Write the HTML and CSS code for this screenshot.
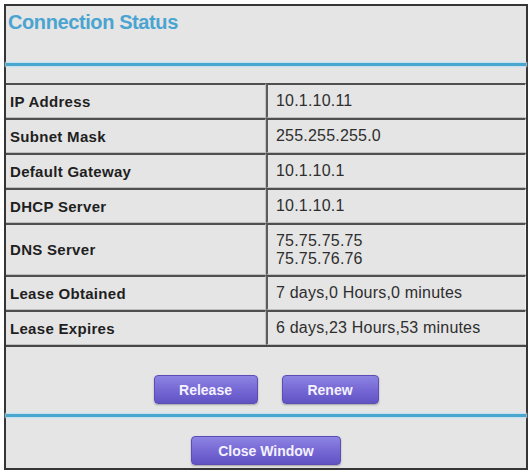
FILE: index.html
```html
<!DOCTYPE html>
<html lang="en">
<head>
    <meta charset="UTF-8">
    <meta name="viewport" content="width=device-width, initial-scale=1.0">
    <title>Connection Status</title>
    <link rel="stylesheet" href="styles.css">
</head>
<body>
    <div class="window">
        <h1>Connection Status</h1>
        <div class="rule rule-top"></div>

        <div class="status-table">
            <div class="status-row">
                <div class="cell cell-label">IP Address</div>
                <div class="cell cell-value">10.1.10.11</div>
            </div>
            <div class="status-row">
                <div class="cell cell-label">Subnet Mask</div>
                <div class="cell cell-value">255.255.255.0</div>
            </div>
            <div class="status-row">
                <div class="cell cell-label">Default Gateway</div>
                <div class="cell cell-value">10.1.10.1</div>
            </div>
            <div class="status-row">
                <div class="cell cell-label">DHCP Server</div>
                <div class="cell cell-value">10.1.10.1</div>
            </div>
            <div class="status-row status-row-tall">
                <div class="cell cell-label">DNS Server</div>
                <div class="cell cell-value">75.75.75.75<br>75.75.76.76</div>
            </div>
            <div class="status-row">
                <div class="cell cell-label">Lease Obtained</div>
                <div class="cell cell-value">7 days,0 Hours,0 minutes</div>
            </div>
            <div class="status-row">
                <div class="cell cell-label">Lease Expires</div>
                <div class="cell cell-value">6 days,23 Hours,53 minutes</div>
            </div>
        </div>

        <div class="actions">
            <button type="button" class="btn btn-release">Release</button>
            <button type="button" class="btn btn-renew">Renew</button>
        </div>
        <div class="rule rule-bottom"></div>
        <div class="actions actions-close">
            <button type="button" class="btn btn-close">Close Window</button>
        </div>
    </div>
</body>
</html>
```

FILE: styles.css
```css
body {
    margin: 0;
    background: #ffffff;
    font-family: 'Liberation Sans', Arial, sans-serif;
}

.window {
    margin: 4px 0 0 4px;
    width: 524px;
    height: 466px;
    box-sizing: border-box;
    border: 2px solid #353535;
    background: #e5e5e5;
}

h1 {
    margin: 4px 0 0 2px;
    font-size: 20px;
    line-height: 24px;
    letter-spacing: -0.4px;
    color: #4aa4d1;
}

.rule {
    height: 3px;
    background: #48a6cf;
    box-shadow: 0 0 2px 1px #bfe0ee;
}

.rule-top {
    margin-top: 29px;
}

.status-table {
    margin-top: 17px;
    border-bottom: 2px solid #474747;
}

.status-row {
    display: grid;
    grid-template-columns: 260px 1fr;
    height: 35px;
}

.status-row-tall {
    height: 52px;
}

.cell {
    display: flex;
    align-items: center;
    box-sizing: border-box;
    border-top: 2px solid #4f4f4f;
    border-bottom: 1px solid #bdbdbd;
    color: #2e2e2e;
}

.cell-label {
    padding-left: 4px;
    border-right: 1px solid #c4c4c4;
    font-size: 15px;
    font-weight: bold;
    letter-spacing: 0.3px;
    color: #1f1f1f;
}

.cell-value {
    padding-left: 8px;
    border-left: 2px solid #5c5c5c;
    border-right: 1px solid #f2f2f2;
    font-size: 16px;
    line-height: 18px;
    letter-spacing: 0.2px;
}

.actions {
    display: flex;
    justify-content: center;
    gap: 24px;
    padding: 28px 0 10px;
}

.actions-close {
    padding: 19px 0 0;
}

.btn {
    height: 29px;
    border: 1px solid #5a4db5;
    border-radius: 4px;
    background: linear-gradient(#8d84e2, #7466d3 55%, #6253c3);
    color: #f4f2ff;
    font-family: 'Liberation Sans', Arial, sans-serif;
    font-size: 14px;
    font-weight: bold;
    box-shadow: 0 1px 2px rgba(0, 0, 0, 0.3);
    cursor: pointer;
}

.btn-release {
    width: 104px;
}

.btn-renew {
    width: 97px;
}

.btn-close {
    width: 150px;
}
```
